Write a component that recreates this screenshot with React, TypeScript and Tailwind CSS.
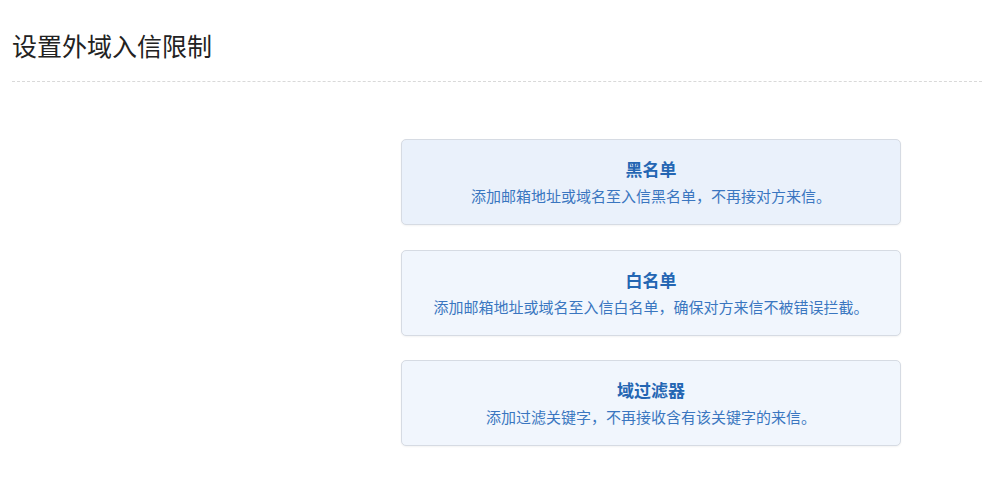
const cards = [
  { title: '黑名单', desc: '添加邮箱地址或域名至入信黑名单，不再接对方来信。', active: true },
  { title: '白名单', desc: '添加邮箱地址或域名至入信白名单，确保对方来信不被错误拦截。', active: false },
  { title: '域过滤器', desc: '添加过滤关键字，不再接收含有该关键字的来信。', active: false },
];

export default function App() {
  return (
    <div
      className="min-h-[485px] w-full bg-white pr-[2px] pl-3"
      style={{ fontFamily: '"Noto Sans CJK SC", "Microsoft YaHei", sans-serif' }}
    >
      <div className="border-b border-dashed border-[#d9d9d9] pt-[27px] pb-[18px]">
        <h1 className="text-[25px] leading-[36px] font-normal text-[#222]">设置外域入信限制</h1>
      </div>

      <div className="flex flex-col gap-[24.5px] pt-[57px] pl-[389px]">
        {cards.map((card) => (
          <button
            key={card.title}
            className={`flex h-[86px] w-[500px] flex-col items-center justify-center rounded-[5px] border border-[#d6dbe3] shadow-[0_1px_2px_rgba(0,0,0,0.05)] ${
              card.active ? 'bg-[#eaf1fb]' : 'bg-[#f1f6fd]'
            }`}
          >
            <span className="text-[17px] leading-[24px] font-bold text-[#2466b3]">{card.title}</span>
            <span className="mt-[4px] text-[15px] leading-[22px] text-[#3a76c0]">{card.desc}</span>
          </button>
        ))}
      </div>
    </div>
  );
}
